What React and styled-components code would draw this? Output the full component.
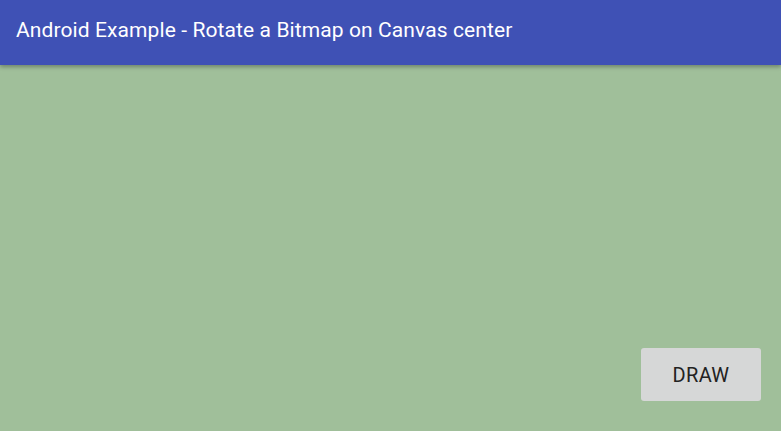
import React from 'react'
import styled, { createGlobalStyle } from 'styled-components'

const Global = createGlobalStyle`
    html, body {
        margin: 0;
        padding: 0;
        height: 100%;
    }
    #root {
        height: 100%;
    }
`;

const App = () => {
    return (
        <Screen>
            <Global />
            <AppBar>
                <Title>Android Example - Rotate a Bitmap on Canvas center</Title>
            </AppBar>
            <Content>
                <DrawButton>DRAW</DrawButton>
            </Content>
        </Screen>
    )
}

export default App

const Screen = styled.div`
    display: flex;
    flex-direction: column;
    height: 100vh;
    background: #a0bf9a;
    font-family: Roboto, "Noto Sans", sans-serif;
    overflow: hidden;
`;

const AppBar = styled.header`
    position: relative;
    z-index: 1;
    display: flex;
    align-items: center;
    height: 65px;
    padding: 0 16px;
    background: #3f51b5;
    box-shadow: 0 2px 4px rgba(0, 0, 0, 0.3);
`;

const Title = styled.h1`
    margin: 0 0 6px;
    font-size: 21px;
    font-weight: 400;
    letter-spacing: 0.1px;
    color: #ffffff;
`;

const Content = styled.main`
    flex: 1;
    display: flex;
    align-items: flex-end;
    justify-content: flex-end;
    padding: 0 20px 30px 0;
`;

const DrawButton = styled.button`
    width: 120px;
    height: 53px;
    padding: 0;
    border: none;
    border-radius: 3px;
    background: #d6d7d7;
    color: #222222;
    font-family: Roboto, sans-serif;
    font-size: 20px;
    letter-spacing: 0.3px;
    cursor: pointer;
`;
